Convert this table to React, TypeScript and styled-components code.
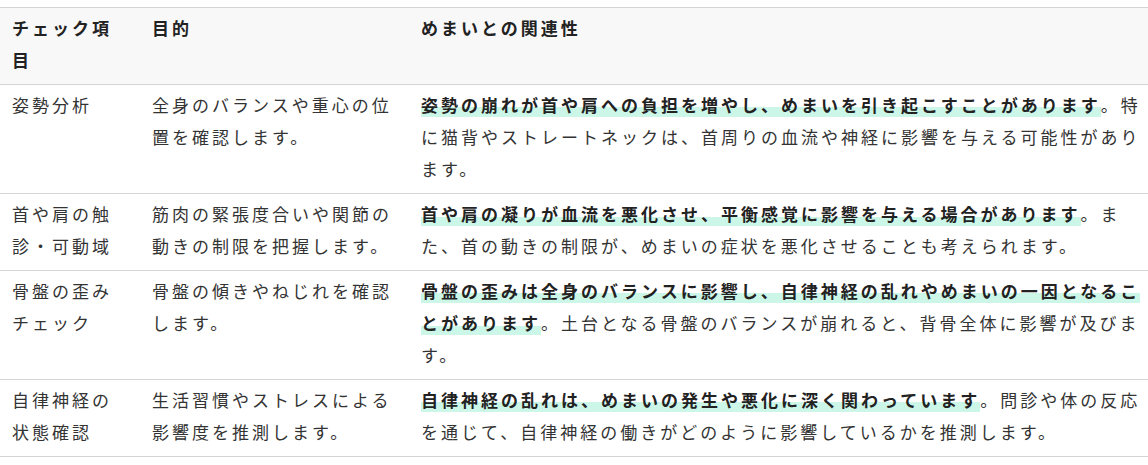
import React from 'react';
import styled, { createGlobalStyle } from 'styled-components';

const rows = [
  {
    item: '姿勢分析',
    purpose: '全身のバランスや重心の位置を確認します。',
    key: '姿勢の崩れが首や肩への負担を増やし、めまいを引き起こすことがあります',
    rest: '。特に猫背やストレートネックは、首周りの血流や神経に影響を与える可能性があります。',
  },
  {
    item: '首や肩の触診・可動域',
    purpose: '筋肉の緊張度合いや関節の動きの制限を把握します。',
    key: '首や肩の凝りが血流を悪化させ、平衡感覚に影響を与える場合があります',
    rest: '。また、首の動きの制限が、めまいの症状を悪化させることも考えられます。',
  },
  {
    item: '骨盤の歪みチェック',
    purpose: '骨盤の傾きやねじれを確認します。',
    key: '骨盤の歪みは全身のバランスに影響し、自律神経の乱れやめまいの一因となることがあります',
    rest: '。土台となる骨盤のバランスが崩れると、背骨全体に影響が及びます。',
  },
  {
    item: '自律神経の状態確認',
    purpose: '生活習慣やストレスによる影響度を推測します。',
    key: '自律神経の乱れは、めまいの発生や悪化に深く関わっています',
    rest: '。問診や体の反応を通じて、自律神経の働きがどのように影響しているかを推測します。',
  },
];

const GlobalStyle = createGlobalStyle`
  body {
    margin: 0;
    background: #fff;
    font-family: "Noto Sans CJK JP", "Noto Sans", sans-serif;
  }
`;

const Wrapper = styled.div`
  padding-top: 7px;
`;

const Table = styled.table`
  width: 100%;
  border-collapse: collapse;
  table-layout: fixed;
  font-size: 17px;
  line-height: 32px;
  letter-spacing: 3px;
  color: #333;
`;

const Col = styled.col<{ $w?: number }>`
  width: ${p => (p.$w ? `${p.$w}px` : 'auto')};
`;

const HeadRow = styled.tr`
  background: #f8f8f8;
  border-top: 1px solid #d4d4d4;
  border-bottom: 1px solid #d4d4d4;
`;

const Th = styled.th<{ $last?: boolean }>`
  padding: 4px ${p => (p.$last ? 4 : 12)}px 8px 12px;
  text-align: left;
  vertical-align: top;
  font-weight: 700;
  color: #222;
`;

const Row = styled.tr`
  border-bottom: 1px solid #d4d4d4;
`;

const Td = styled.td<{ $last?: boolean }>`
  padding: 4px ${p => (p.$last ? 4 : 12)}px 8px 12px;
  vertical-align: top;
`;

const Marker = styled.strong`
  font-weight: 700;
  color: #222;
  background: linear-gradient(transparent 62%, #ccf6e8 62%);
`;

export default function App() {
  return (
    <Wrapper>
      <GlobalStyle />
      <Table>
        <colgroup>
          <Col $w={140} />
          <Col $w={269} />
          <Col />
        </colgroup>
        <thead>
          <HeadRow>
            <Th>チェック項目</Th>
            <Th>目的</Th>
            <Th $last>めまいとの関連性</Th>
          </HeadRow>
        </thead>
        <tbody>
          {rows.map(r => (
            <Row key={r.item}>
              <Td>{r.item}</Td>
              <Td>{r.purpose}</Td>
              <Td $last>
                <Marker>{r.key}</Marker>
                {r.rest}
              </Td>
            </Row>
          ))}
        </tbody>
      </Table>
    </Wrapper>
  );
}
